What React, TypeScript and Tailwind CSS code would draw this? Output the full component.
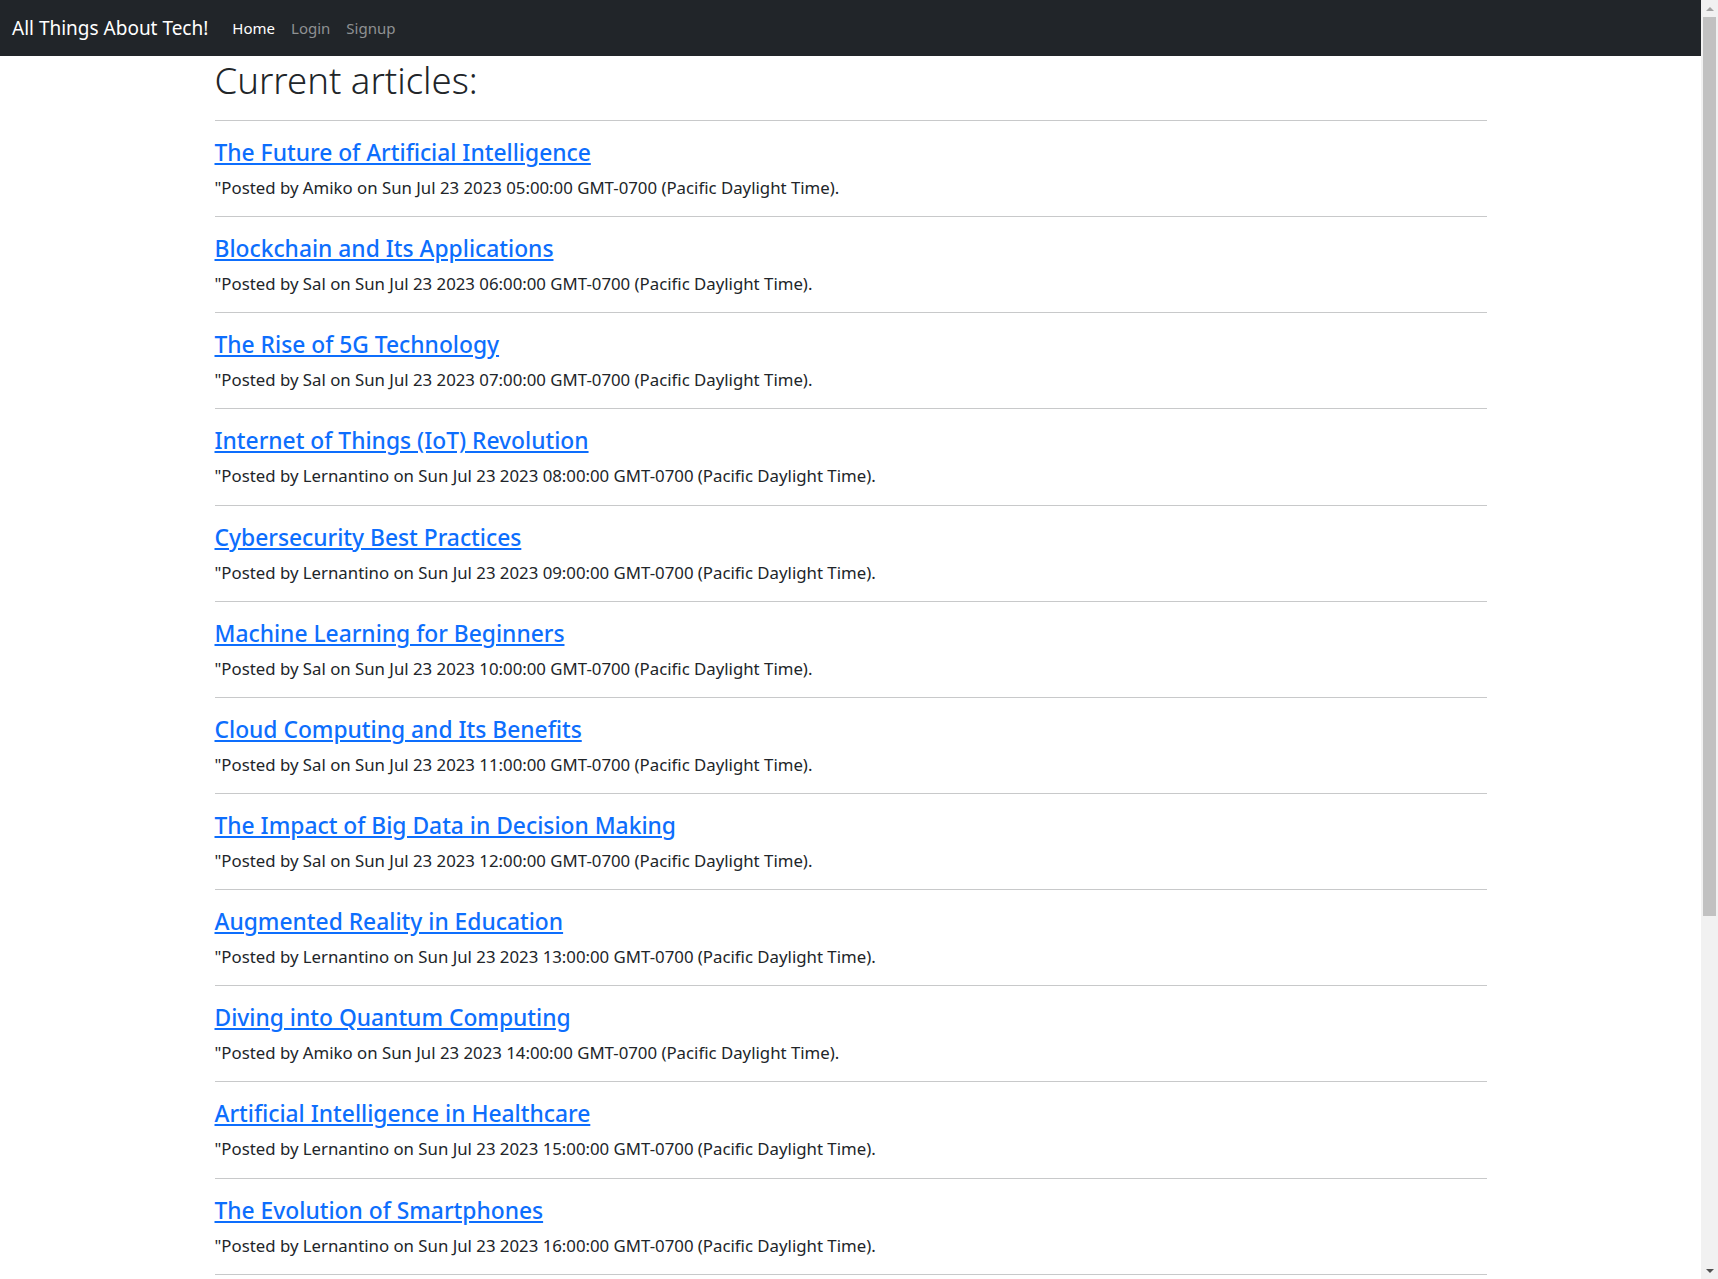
import React from "react";

const articles = [
  { title: "The Future of Artificial Intelligence", author: "Amiko", hour: "05" },
  { title: "Blockchain and Its Applications", author: "Sal", hour: "06" },
  { title: "The Rise of 5G Technology", author: "Sal", hour: "07" },
  { title: "Internet of Things (IoT) Revolution", author: "Lernantino", hour: "08" },
  { title: "Cybersecurity Best Practices", author: "Lernantino", hour: "09" },
  { title: "Machine Learning for Beginners", author: "Sal", hour: "10" },
  { title: "Cloud Computing and Its Benefits", author: "Sal", hour: "11" },
  { title: "The Impact of Big Data in Decision Making", author: "Sal", hour: "12" },
  { title: "Augmented Reality in Education", author: "Lernantino", hour: "13" },
  { title: "Diving into Quantum Computing", author: "Amiko", hour: "14" },
  { title: "Artificial Intelligence in Healthcare", author: "Lernantino", hour: "15" },
  { title: "The Evolution of Smartphones", author: "Lernantino", hour: "16" },
];

const App = () => {
  return (
    <div className="flex h-[1279px] overflow-hidden bg-white font-['Noto_Sans',sans-serif] text-[#212529]">
      <div className="flex-1 min-w-0">
        {/* NAVBAR */}
        <nav className="h-14 bg-[#212529] flex items-center px-3">
          <a href="#" className="text-white text-[19px] mr-4">
            All Things About Tech!
          </a>
          <a href="#" className="text-white text-[15px] px-2">Home</a>
          <a href="#" className="text-[#8f9193] text-[15px] px-2">Login</a>
          <a href="#" className="text-[#8f9193] text-[15px] px-2">Signup</a>
        </nav>

        {/* ARTICLES */}
        <main className="max-w-[1272px] mx-auto">
          <h1 className="text-[36.5px] leading-[48px] font-light">Current articles:</h1>
          <div className="mt-4 border-t border-[#c8c9ca]" />
          {articles.map((a) => (
            <div key={a.title}>
              <div className="pt-[17px] pb-[15.15px]">
                <h4 className="text-[22.8px] leading-[29px] font-medium">
                  <a href="#" className="text-[#0d6efd] underline">{a.title}</a>
                </h4>
                <p className="mt-2 text-[16.8px] leading-[26px]">
                  "Posted by {a.author} on Sun Jul 23 2023 {a.hour}:00:00 GMT-0700 (Pacific Daylight Time).
                </p>
              </div>
              <div className="border-t border-[#c8c9ca]" />
            </div>
          ))}
        </main>
      </div>

      {/* SCROLLBAR */}
      <div className="w-[17px] bg-[#f1f1f1] flex flex-col items-center">
        <div className="h-[17px] flex items-center justify-center">
          <div className="w-0 h-0 border-x-[4px] border-x-transparent border-b-[4px] border-b-[#a3a3a3]" />
        </div>
        <div className="w-[13px] h-[899px] bg-[#c1c1c1]" />
        <div className="flex-1" />
        <div className="h-[17px] flex items-center justify-center">
          <div className="w-0 h-0 border-x-[4px] border-x-transparent border-t-[4px] border-t-[#505050]" />
        </div>
      </div>
    </div>
  );
};

export default App;
